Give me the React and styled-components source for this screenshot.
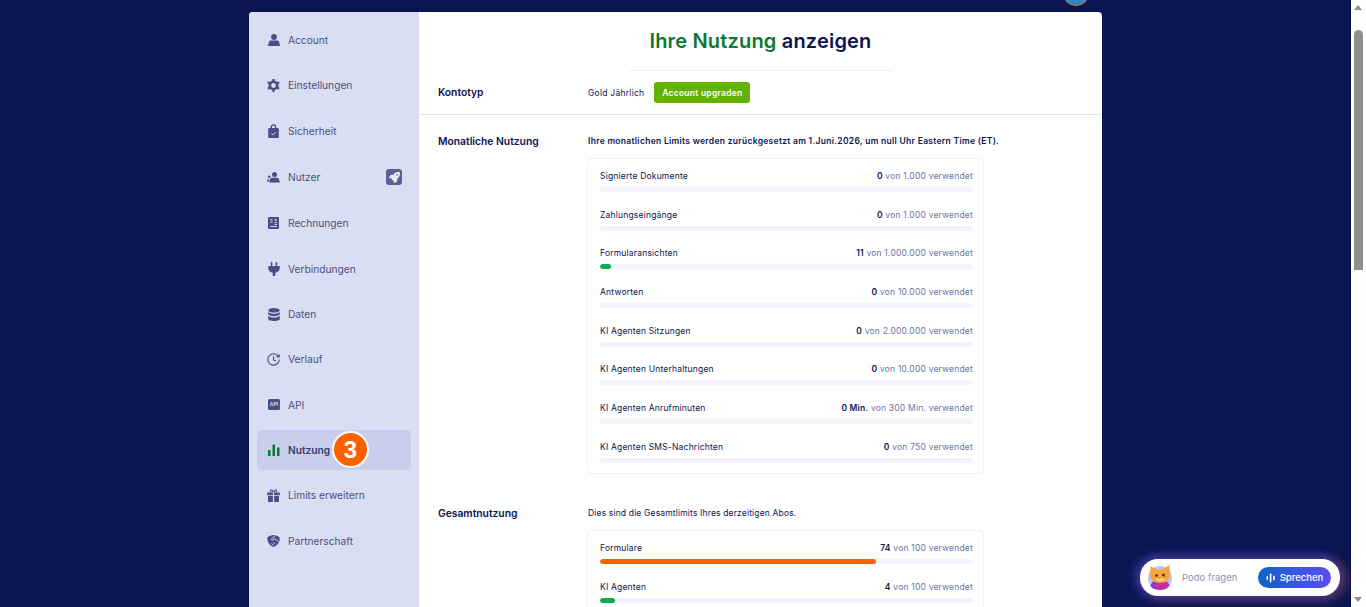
import React from "react";
import styled, { createGlobalStyle } from "styled-components";
import { FaRocket } from "react-icons/fa6";

const GlobalStyle = createGlobalStyle`
  html, body {
    margin: 0;
    height: 100%;
    overflow: hidden;
    background: #0a1551;
    font-family: "Inter", "Liberation Sans", sans-serif;
  }
  * { box-sizing: border-box; }
`;

const Screen = styled.div`
  display: flex;
  height: 607px;
  width: 1366px;
`;

const Page = styled.div`
  position: relative;
  flex: 1;
  overflow: hidden;
  padding-top: 12px;
  padding-left: 249px;
`;

const Avatar = styled.div`
  position: absolute;
  left: 1062px;
  top: -22px;
  width: 28px;
  height: 28px;
  border-radius: 50%;
  background: #2f86c4;
  border: 1px solid #e8692a;
`;

const Card = styled.div`
  display: flex;
  width: 853px;
  height: 700px;
  background: #fff;
  border-radius: 4px 4px 0 0;
  overflow: hidden;
`;

const Sidebar = styled.nav`
  width: 170px;
  flex-shrink: 0;
  background: #dadef3;
  padding: 8px 8px 0;
  display: flex;
  flex-direction: column;
  gap: 5.35px;
`;

const NavItem = styled.a`
  position: relative;
  display: flex;
  align-items: center;
  height: ${(p) => (p.$tall ? 42 : 40)}px;
  flex-shrink: 0;
  padding: 0 9px 0 10px;
  border-radius: 4px;
  font-size: 10.2px;
  font-weight: ${(p) => (p.$active ? 600 : 400)};
  color: ${(p) => (p.$active ? "#343c6a" : "#4a4f7e")};
  background: ${(p) => (p.$active ? "#c8cfec" : "transparent")};
`;

const NavIcon = styled.span`
  display: flex;
  align-items: center;
  justify-content: center;
  width: 13px;
  height: 14px;
  margin-right: 8px;
  color: #494f82;
`;

const RocketBadge = styled.span`
  display: flex;
  align-items: center;
  justify-content: center;
  width: 16px;
  height: 16px;
  margin-left: auto;
  border-radius: 3px;
  background: #5b6190;
  color: #e8ebf8;
  font-size: 11px;
`;

const StepBadge = styled.span`
  position: absolute;
  left: 75px;
  top: 1px;
  width: 37px;
  height: 37px;
  border-radius: 50%;
  border: 2px solid #fff;
  background: #ff6100;
  color: #fff;
  display: flex;
  align-items: center;
  justify-content: center;
  font: 700 24px "Liberation Sans", sans-serif;
`;

const Main = styled.main`
  flex: 1;
  min-width: 0;
`;

const Title = styled.h1`
  margin: 0;
  padding-top: 16px;
  height: 58px;
  text-align: center;
  font-size: 20px;
  line-height: 26px;
  font-weight: 600;
  letter-spacing: 0.18px;
  color: #0a1551;

  span {
    color: #0a7a33;
  }
`;

const TitleRule = styled.div`
  width: 264px;
  height: 1px;
  margin: 0 auto;
  background: #eeeef3;
`;

const AccountRow = styled.section`
  display: flex;
  align-items: center;
  height: 44px;
  padding-left: 19px;
  border-bottom: 1px solid #e3e3ee;
`;

const SectionLabel = styled.h2`
  margin: 0;
  width: 150px;
  flex-shrink: 0;
  font-size: 10.3px;
  line-height: 14px;
  font-weight: 600;
  color: #0a1551;
`;

const AccountLabel = styled(SectionLabel)`
  margin-bottom: 2px;
`;

const PlanName = styled.span`
  font-size: 8.5px;
  letter-spacing: 0.25px;
  color: #0a1551;
  margin-right: 10px;
`;

const UpgradeButton = styled.button`
  width: 96px;
  height: 21px;
  border: 0;
  padding: 0;
  border-radius: 3px;
  background: #64b200;
  color: #fff;
  font: 600 8.5px "Inter", sans-serif;
  letter-spacing: 0.25px;
`;

const UsageSection = styled.section`
  display: flex;
  padding: ${(p) => p.$top}px 0 0 19px;
`;

const UsageBody = styled.div`
  width: 397px;
  margin-left: -1px;
`;

const Description = styled.p`
  margin: 0 0 10px 1px;
  font-size: 8.5px;
  line-height: 14px;
  font-weight: ${(p) => (p.$strong ? 600 : 400)};
  letter-spacing: ${(p) => (p.$strong ? 0.3 : 0.16)}px;
  color: #0a1551;
  white-space: nowrap;
`;

const UsageBox = styled.div`
  border: 1px solid #f0f0f8;
  border-radius: 4px;
  padding: 11px 10px 10px 12px;
  display: flex;
  flex-direction: column;
  gap: 16.7px;
`;

const UsageRow = styled.div`
  display: flex;
  flex-direction: column;
  gap: 5px;
`;

const UsageText = styled.div`
  display: flex;
  justify-content: space-between;
  font-size: 8.5px;
  line-height: 12px;
  letter-spacing: 0.2px;
  color: #0a1551;
`;

const UsageCount = styled.span`
  color: #6c73a8;

  b {
    color: #0a1551;
    font-weight: 600;
  }
`;

const Track = styled.div`
  height: 5px;
  border-radius: 3px;
  background: #f3f3fe;
  overflow: hidden;
`;

const Fill = styled.div`
  height: 100%;
  border-radius: 3px;
  background: ${(p) => p.$color};
`;

const ChatWidget = styled.div`
  position: absolute;
  left: 1140px;
  top: 559px;
  width: 200px;
  height: 37px;
  display: flex;
  align-items: center;
  padding: 0 9px 0 8px;
  border-radius: 18px;
  background: #fff;
  box-shadow: -2px -1px 10px 3px rgba(90, 80, 220, 0.55), 6px 2px 12px 2px rgba(200, 95, 60, 0.32);
`;

const ChatHint = styled.span`
  margin-left: 10px;
  font: 400 9.5px "Inter", sans-serif;
  color: #8e92b5;
`;

const TalkButton = styled.button`
  margin-left: auto;
  width: 73px;
  height: 21px;
  border: 0;
  padding: 0;
  border-radius: 11px;
  display: flex;
  align-items: center;
  justify-content: center;
  gap: 4px;
  background: linear-gradient(90deg, #0f62c7, #5a4cf5);
  color: #fff;
  font: 500 9.5px "Inter", sans-serif;
`;

const Scrollbar = styled.div`
  position: relative;
  width: 15px;
  flex-shrink: 0;
  background: #fff;
`;

const ScrollThumb = styled.div`
  position: absolute;
  left: 3px;
  top: 30px;
  width: 9px;
  height: 240px;
  border-radius: 5px 5px 0 0;
  background: #8f8f8f;
`;

const Arrow = styled.span`
  position: absolute;
  left: 3px;
  ${(p) => (p.$down ? "bottom: 5px;" : "top: 5px;")}
  width: 0;
  height: 0;
  border-left: 4.5px solid transparent;
  border-right: 4.5px solid transparent;
  ${(p) => (p.$down ? "border-top" : "border-bottom")}: 5px solid #8f8f8f;
`;

// sidebar icons, drawn in currentColor
const Glyph = ({ children, w = 12, h = 12 }) => (
  <svg width={w} height={h} viewBox={`0 0 ${w} ${h}`} fill="currentColor">
    {children}
  </svg>
);

const IconUser = () => (
  <Glyph>
    <circle cx="6" cy="3" r="2.9" />
    <path d="M2.500 6.500h7c1 0 1.500 1 1.800 2.200l.7 3.300H0l.7-3.300C1 7.500 1.500 6.500 2.500 6.500z" />
  </Glyph>
);

const IconGear = () => (
  <Glyph w={13} h={13}>
    <circle cx="6.500" cy="6.500" r="3.700" fill="none" stroke="currentColor" strokeWidth="2.600" />
    <path
      stroke="currentColor"
      strokeWidth="2.200"
      d="M6.500 0v2M6.500 11v2M.8 3.200l1.800 1M10.400 8.800l1.800 1M.8 9.800l1.800-1M10.400 4.200l1.800-1"
    />
  </Glyph>
);

const IconLock = () => (
  <Glyph w={11} h={14}>
    <path d="M2.700 4V3a2.800 2.800 0 0 1 5.600 0v1h1.500a1 1 0 0 1 1 1v8a1 1 0 0 1-1 1H1.200a1 1 0 0 1-1-1V5a1 1 0 0 1 1-1h1.500zm1.300 0h3V3a1.500 1.500 0 0 0-3 0v1z" />
    <path fill="none" stroke="#dadef3" strokeWidth="1" d="M3.300 9.500l1.500 1.400 2.800-2.800" />
  </Glyph>
);

const IconUsers = () => (
  <Glyph w={13} h={11}>
    <circle cx="7.500" cy="2.600" r="2.500" />
    <path d="M4.800 5.800h5.400c1 0 1.500.8 1.800 1.700l.8 3H2.200l.8-3c.3-.9.800-1.700 1.800-1.700z" />
    <circle cx="2.200" cy="4.800" r="1.300" />
    <path d="M.1 8.700c0-.9.800-1.800 1.900-1.800h.4l-.6 2.600H.1z" />
  </Glyph>
);

const IconInvoice = () => (
  <Glyph w={11} h={12}>
    <rect width="11" height="12" rx="1.200" />
    <path fill="none" stroke="#dadef3" strokeWidth="0.900" d="M2 2.800h2.500M2 5h2.500M6.500 5.500h2.500M6.500 7.500h2.500M2 9.500h7" />
    <circle cx="7.700" cy="3" r="1" fill="#dadef3" />
  </Glyph>
);

const IconPlug = () => (
  <Glyph w={12} h={14}>
    <rect x="2.700" y="0" width="1.700" height="4" rx="0.800" />
    <rect x="7.600" y="0" width="1.700" height="4" rx="0.800" />
    <path d="M.3 4h11.400v2.200c0 2.600-1.900 4.100-4.400 4.500V14H4.700v-3.300C2.200 10.300.3 8.800.3 6.200z" />
  </Glyph>
);

const IconDatabase = () => (
  <Glyph w={12} h={13}>
    <ellipse cx="6" cy="2.300" rx="5.800" ry="2.300" />
    <path d="M.2 3.800C1 5.300 3.500 5.800 6 5.800s5-.5 5.800-2v2.400C11 7.500 8.500 8.200 6 8.200S1 7.500.2 6.200z" />
    <path d="M.2 7.800C1 9 3.500 9.600 6 9.600s5-.6 5.800-1.800v2.900c0 1.300-2.600 2.300-5.800 2.300S.2 12 .2 10.700z" />
  </Glyph>
);

const IconHistory = () => (
  <Glyph w={13} h={13}>
    <path fill="none" stroke="currentColor" strokeWidth="1.100" strokeLinecap="round" d="M11.400 3.300A5.700 5.700 0 1 0 12.300 7" />
    <path d="M12.900 1l-.3 3.800-3.600-.9z" />
    <path fill="none" stroke="currentColor" strokeWidth="1.100" strokeLinecap="round" d="M6.500 3.500V7l2.300 1" />
  </Glyph>
);

const IconApi = () => (
  <Glyph w={12} h={11}>
    <rect width="12" height="11" rx="1.500" />
    <text x="6" y="7.400" textAnchor="middle" fontSize="5" fontWeight="700" fill="#dadef3" fontFamily="Liberation Sans">API</text>
  </Glyph>
);

const IconBars = () => (
  <svg width="12" height="12" viewBox="0 0 12 12" fill="#0a7a33">
    <rect x="0" y="6" width="2.500" height="6" rx="0.500" />
    <rect x="4.500" y="0.500" width="2.500" height="11.500" rx="0.500" />
    <rect x="9" y="3.500" width="2.500" height="8.500" rx="0.500" />
  </svg>
);

const IconGift = () => (
  <Glyph w={13} h={13}>
    <path fillRule="evenodd" d="M3.500 3.200C2.500 2.300 2.600.500 4 .300c1-.1 2 .7 2.500 2C7 1 8 .2 9 .3c1.400.2 1.500 2 .5 2.900zM4.200 1.300c-.7 0-.8.9-.1 1.300h1.500C5.300 1.800 4.800 1.300 4.200 1.300zm4.600 0c-.6 0-1.100.5-1.400 1.300h1.500c.7-.4.600-1.300-.1-1.300z" />
    <path d="M.2 3.600h5.700v2.600H.2zM7.100 3.600h5.700v2.600H7.100zM1 7h4.900v6H2c-.6 0-1-.4-1-1zM7.100 7H12v5c0 .6-.4 1-1 1H7.100z" />
  </Glyph>
);

const IconHandshake = () => (
  <Glyph w={13} h={12}>
    <path d="M.3 2.700C1.800.9 4.200 0 6.500 0s4.700.9 6.200 2.700c.3 3.800-1.500 7.300-6.200 9.300C1.800 10 0 6.500.3 2.700z" />
    <path fill="none" stroke="#dadef3" strokeWidth="0.900" d="M8.600.5L4.500 3.800c-.5.8.5 1.700 1.300 1.200l2.300-1.500 3.300 3.300M6.200 7.400l2 2M4.600 8.700l1.800 1.700" />
  </Glyph>
);

const IconCat = () => (
  <svg width="24" height="25" viewBox="0 0 24 25">
    <circle cx="12" cy="13" r="12" fill="#b9c4f0" />
    <path fill="#c42aa8" d="M2.500 21c.8-4 4-6 9.500-6s8.700 2 9.500 6c-2.200 2.700-5.500 4-9.500 4s-7.300-1.300-9.500-4z" />
    <path fill="#7a3fc4" d="M2.500 21c1-3 3-4.800 6-5.500l-2 8.700c-1.600-.7-3-1.800-4-3.200z" />
    <path fill="#f9a53d" d="M2.500 1l5.800 3.500h6L21.500 0l.5 9.500c.6 5-4.300 8.500-10 8.500S1.500 14.500 2.200 9.500z" />
    <path fill="#fcd07e" d="M7 14c2-1.500 8-1.500 10 0-1 2.500-9 2.500-10 0z" />
    <circle cx="8.500" cy="10.500" r="1.300" fill="#3a2a1a" />
    <path stroke="#3a2a1a" strokeWidth="1.200" fill="none" d="M14 10.300l3-1.300M14 10.300l3 1" />
    <path fill="#e0574a" d="M10.500 12.500h2.500l-1.200 1.500z" />
  </svg>
);

const IconWave = () => (
  <svg width="10" height="10" viewBox="0 0 10 10" fill="#fff">
    <rect x="0.500" y="3" width="1.600" height="4" rx="0.800" />
    <rect x="3.800" y="0.500" width="1.600" height="9" rx="0.800" />
    <rect x="7.100" y="2.500" width="1.600" height="5" rx="0.800" />
  </svg>
);

const navItems = [
  { label: "Account", icon: <IconUser /> },
  { label: "Einstellungen", icon: <IconGear /> },
  { label: "Sicherheit", icon: <IconLock /> },
  { label: "Nutzer", icon: <IconUsers />, rocket: true },
  { label: "Rechnungen", icon: <IconInvoice /> },
  { label: "Verbindungen", icon: <IconPlug /> },
  { label: "Daten", icon: <IconDatabase /> },
  { label: "Verlauf", icon: <IconHistory /> },
  { label: "API", icon: <IconApi /> },
  { label: "Nutzung", icon: <IconBars />, active: true, step: 3 },
  { label: "Limits erweitern", icon: <IconGift /> },
  { label: "Partnerschaft", icon: <IconHandshake /> },
];

const monthly = [
  { label: "Signierte Dokumente", used: "0", total: "1.000", pct: 0 },
  { label: "Zahlungseingänge", used: "0", total: "1.000", pct: 0 },
  { label: "Formularansichten", used: "11", total: "1.000.000", pct: 3, color: "#0ead4a" },
  { label: "Antworten", used: "0", total: "10.000", pct: 0 },
  { label: "KI Agenten Sitzungen", used: "0", total: "2.000.000", pct: 0 },
  { label: "KI Agenten Unterhaltungen", used: "0", total: "10.000", pct: 0 },
  { label: "KI Agenten Anrufminuten", used: "0 Min.", total: "300 Min.", pct: 0 },
  { label: "KI Agenten SMS-Nachrichten", used: "0", total: "750", pct: 0 },
];

const overall = [
  { label: "Formulare", used: "74", total: "100", pct: 74, color: "#ff6100" },
  { label: "KI Agenten", used: "4", total: "100", pct: 4, color: "#0ead4a" },
];

const Usage = ({ rows }) => (
  <UsageBox>
    {rows.map((r) => (
      <UsageRow key={r.label}>
        <UsageText>
          <span>{r.label}</span>
          <UsageCount>
            <b>{r.used}</b> von {r.total} verwendet
          </UsageCount>
        </UsageText>
        <Track>
          {r.pct > 0 && <Fill $color={r.color} style={{ width: `${r.pct}%` }} />}
        </Track>
      </UsageRow>
    ))}
  </UsageBox>
);

export default function App() {
  return (
    <Screen>
      <GlobalStyle />
      <Page>
        <Avatar />
        <Card>
          <Sidebar>
            {navItems.map((item) => (
              <NavItem key={item.label} $active={item.active} $tall={item.rocket}>
                <NavIcon>{item.icon}</NavIcon>
                {item.label}
                {item.rocket && (
                  <RocketBadge>
                    <FaRocket />
                  </RocketBadge>
                )}
                {item.step && <StepBadge>{item.step}</StepBadge>}
              </NavItem>
            ))}
          </Sidebar>
          <Main>
            <Title>
              <span>Ihre Nutzung</span> anzeigen
            </Title>
            <TitleRule />
            <AccountRow>
              <AccountLabel>Kontotyp</AccountLabel>
              <PlanName>Gold Jährlich</PlanName>
              <UpgradeButton>Account upgraden</UpgradeButton>
            </AccountRow>
            <UsageSection $top={19}>
              <SectionLabel>Monatliche Nutzung</SectionLabel>
              <UsageBody>
                <Description $strong>
                  Ihre monatlichen Limits werden zurückgesetzt am 1.Juni.2026, um null Uhr Eastern Time (ET).
                </Description>
                <Usage rows={monthly} />
              </UsageBody>
            </UsageSection>
            <UsageSection $top={32}>
              <SectionLabel>Gesamtnutzung</SectionLabel>
              <UsageBody>
                <Description>Dies sind die Gesamtlimits Ihres derzeitigen Abos.</Description>
                <Usage rows={overall} />
              </UsageBody>
            </UsageSection>
          </Main>
        </Card>
        <ChatWidget>
          <IconCat />
          <ChatHint>Podo fragen</ChatHint>
          <TalkButton>
            <IconWave />
            Sprechen
          </TalkButton>
        </ChatWidget>
      </Page>
      <Scrollbar>
        <Arrow />
        <ScrollThumb />
        <Arrow $down />
      </Scrollbar>
    </Screen>
  );
}
